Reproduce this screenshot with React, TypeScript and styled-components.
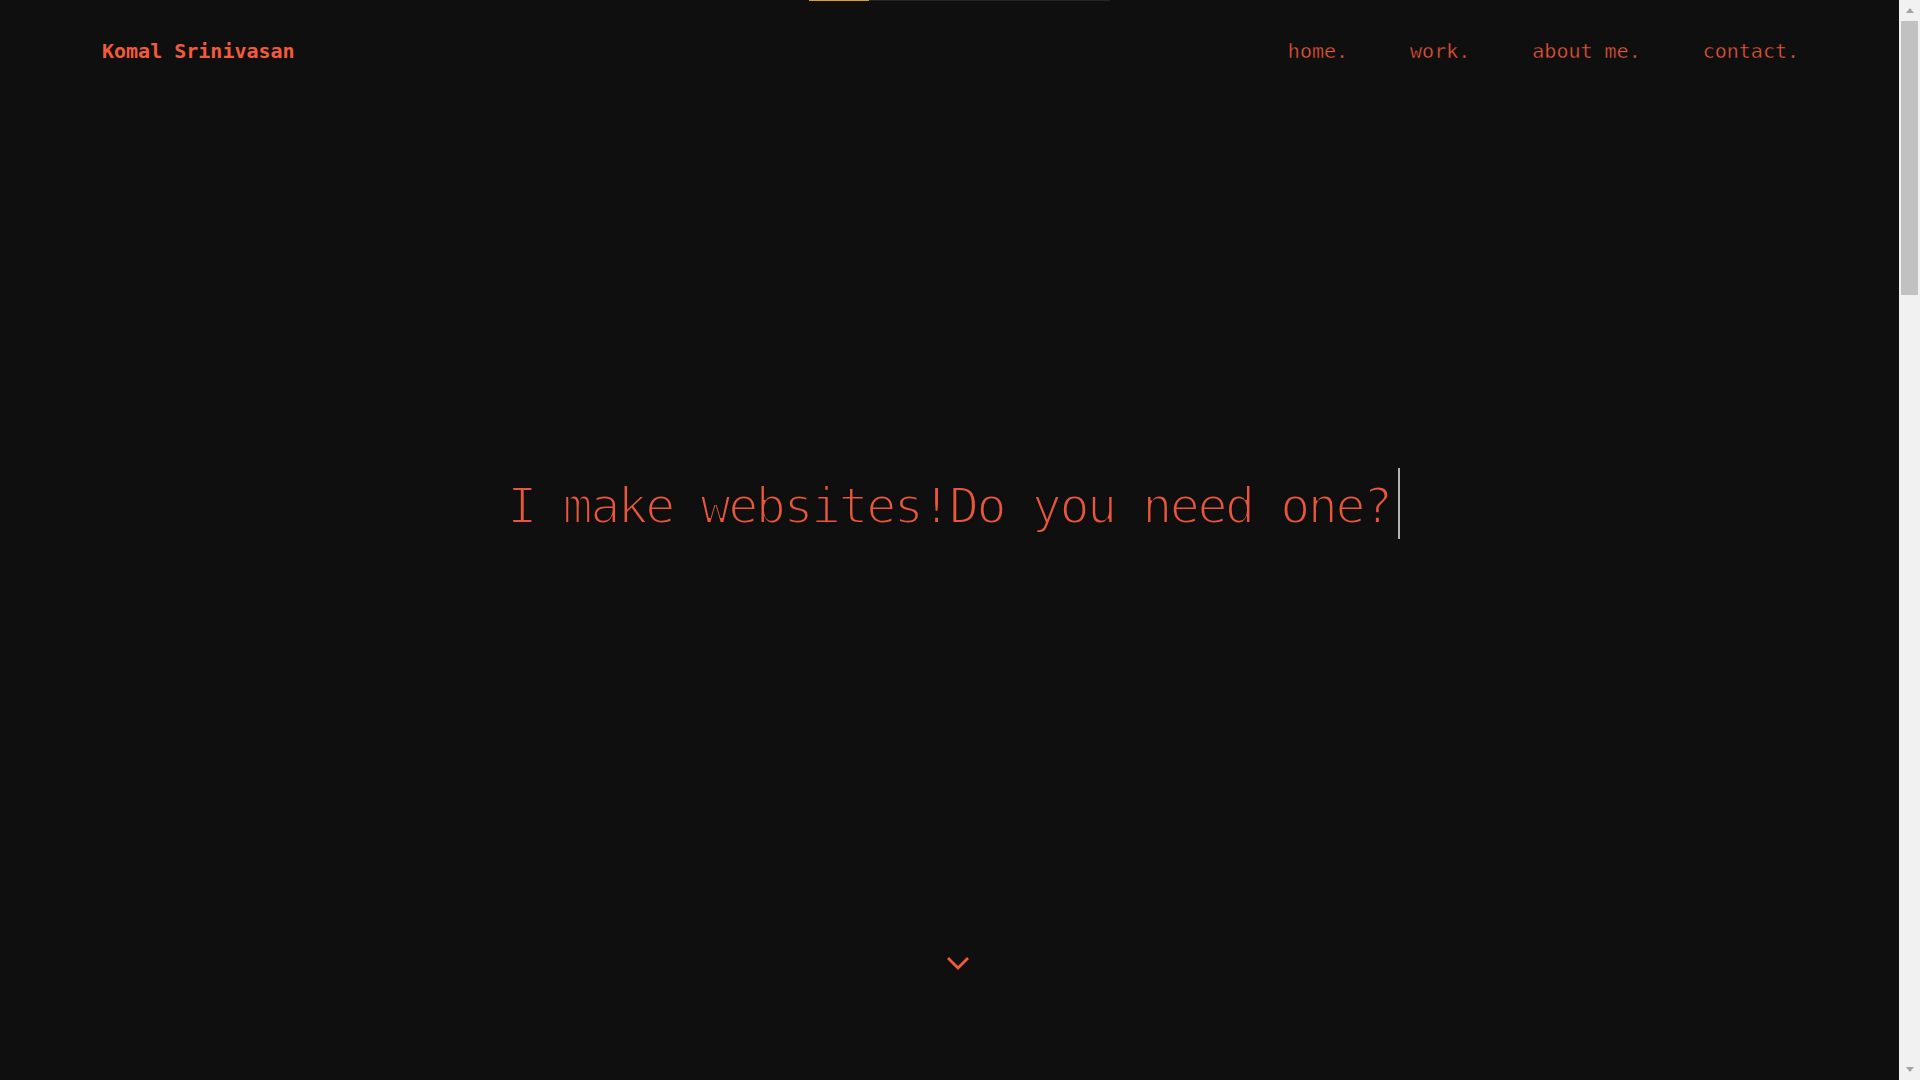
import React from "react";
import styled, { createGlobalStyle } from "styled-components";

const BG = "#0f0f0f";
const ACCENT = "#e9563b";
const LOGO = "#f25a3c";
const MONO = `"DejaVu Sans Mono", "Liberation Mono", monospace`;

const GlobalStyle = createGlobalStyle`
  * { box-sizing: border-box; }
  html, body {
    margin: 0;
    padding: 0;
    background: ${BG};
    overflow: hidden;
  }
  body {
    font-family: ${MONO};
    color: ${ACCENT};
  }
`;

const ProgressTrack = styled.div`
  position: fixed;
  top: 0;
  left: 809px;
  width: 301px;
  height: 1px;
  background: #262626;
  z-index: 10;
`;

const ProgressFill = styled.div<{ $percent: number }>`
  height: 100%;
  width: ${(p) => p.$percent}%;
  background: #e39b27;
`;

const Page = styled.div`
  display: flex;
  height: 100vh;
`;

const Main = styled.main`
  flex: 1;
  display: flex;
  flex-direction: column;
  min-width: 0;
`;

const Header = styled.header`
  display: flex;
  justify-content: space-between;
  align-items: flex-start;
  height: 64px;
  padding: 39px 100px 0 102px;
`;

const Logo = styled.a`
  font-family: ${MONO};
  font-weight: 700;
  font-size: 20px;
  line-height: 24px;
  color: ${LOGO};
  text-decoration: none;
`;

const Nav = styled.nav`
  display: flex;
  gap: 62px;
`;

const NavLink = styled.a`
  font-family: ${MONO};
  font-size: 20px;
  line-height: 24px;
  color: ${ACCENT};
  text-decoration: none;
  -webkit-text-stroke: 0.4px ${BG};
`;

const Hero = styled.section`
  flex: 1;
  display: flex;
  flex-direction: column;
  align-items: center;
  padding-top: 404px;
  padding-left: 8px;
`;

const TypedLine = styled.h1`
  margin: 0;
  display: flex;
  align-items: center;
  font-weight: 400;
`;

const TypedText = styled.span`
  font-family: ${MONO};
  font-size: 50px;
  line-height: 60px;
  padding-top: 4px;
  letter-spacing: -2.5px;
  color: ${ACCENT};
  -webkit-text-stroke: 2.1px ${BG};
  white-space: pre;
`;

const Caret = styled.span`
  display: block;
  width: 2px;
  height: 71px;
  margin-left: 7px;
  background: #b3b3b3;
`;

const ScrollCue = styled.a`
  display: block;
  width: 24px;
  height: 16px;
  margin-top: 416px;
  margin-left: 9px;
  color: #f25a3c;
`;

const ScrollRail = styled.aside`
  width: 21px;
  flex-shrink: 0;
  display: flex;
  flex-direction: column;
  background: #f1f1f1;
`;

const RailButton = styled.div`
  height: 21px;
  display: flex;
  align-items: center;
  justify-content: center;
`;

const Arrow = styled.span<{ $down?: boolean }>`
  width: 0;
  height: 0;
  border-left: 4.5px solid transparent;
  border-right: 4.5px solid transparent;
  ${(p) =>
    p.$down
      ? "border-top: 5px solid #a3a3a3;"
      : "border-bottom: 5px solid #a3a3a3;"}
`;

const RailTrack = styled.div`
  flex: 1;
  padding: 0 2px;
`;

const Thumb = styled.div`
  height: 274px;
  background: #c1c1c1;
`;

const navItems = [
  { label: "home.", href: "#home" },
  { label: "work.", href: "#work" },
  { label: "about me.", href: "#about" },
  { label: "contact.", href: "#contact" },
];

export default function App() {
  return (
    <>
      <GlobalStyle />
      <ProgressTrack>
        <ProgressFill $percent={20} />
      </ProgressTrack>
      <Page>
        <Main>
          <Header id="home">
            <Logo href="#home">Komal Srinivasan</Logo>
            <Nav>
              {navItems.map((item) => (
                <NavLink key={item.label} href={item.href}>
                  {item.label}
                </NavLink>
              ))}
            </Nav>
          </Header>
          <Hero>
            <TypedLine>
              <TypedText>I make websites!Do you need one?</TypedText>
              <Caret />
            </TypedLine>
            <ScrollCue href="#work" aria-label="scroll down">
              <svg width="24" height="16" viewBox="0 0 24 16" fill="none">
                <polyline
                  points="2,3 12,13 22,3"
                  stroke="currentColor"
                  strokeWidth="2.8"
                  strokeLinejoin="miter"
                />
              </svg>
            </ScrollCue>
          </Hero>
        </Main>
        <ScrollRail aria-hidden="true">
          <RailButton>
            <Arrow />
          </RailButton>
          <RailTrack>
            <Thumb />
          </RailTrack>
          <RailButton>
            <Arrow $down />
          </RailButton>
        </ScrollRail>
      </Page>
    </>
  );
}
